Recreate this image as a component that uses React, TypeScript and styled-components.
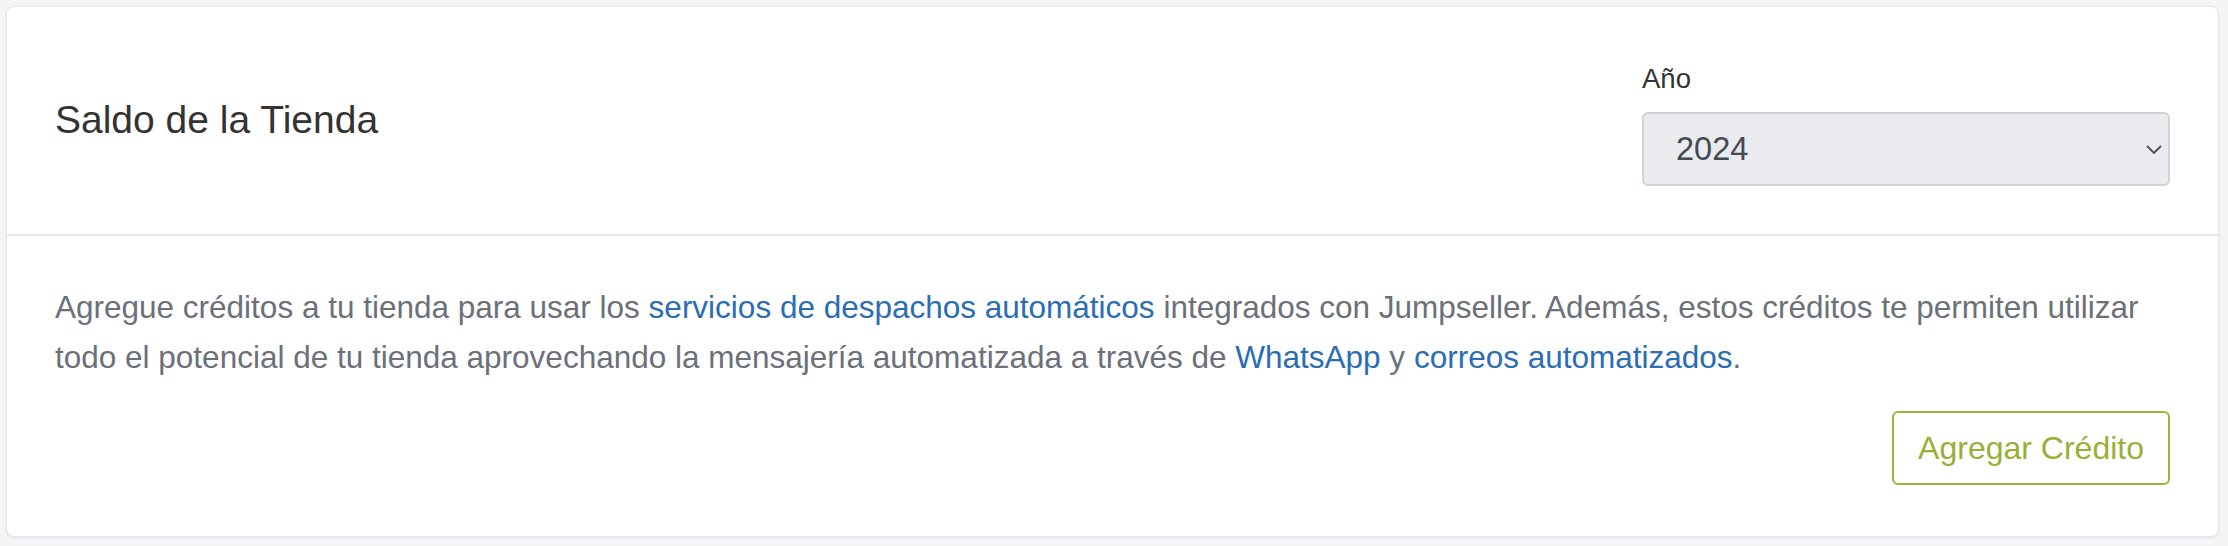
import React, { useState } from 'react';
import styled, { createGlobalStyle } from 'styled-components';

const GlobalStyle = createGlobalStyle`
  html, body {
    margin: 0;
    padding: 0;
    background: #f4f5f7;
    font-family: 'Liberation Sans', Arial, sans-serif;
  }
`;

const years = ['2024', '2023', '2022', '2021'];

export default function App() {
  const [year, setYear] = useState('2024');

  return (
    <>
      <GlobalStyle />
      <Page>
        <Card>
          <CardHeader>
            <Title>Saldo de la Tienda</Title>
            <Field>
              <Label htmlFor="year">Año</Label>
              <SelectWrap>
                <Select id="year" value={year} onChange={(ev) => setYear(ev.target.value)}>
                  {years.map((y) => (
                    <option key={y} value={y}>
                      {y}
                    </option>
                  ))}
                </Select>
                <Chevron width="16" height="9" viewBox="0 0 16 9">
                  <path d="M1 1l7 7 7-7" fill="none" stroke="#4a4f57" strokeWidth="1.8" />
                </Chevron>
              </SelectWrap>
            </Field>
          </CardHeader>
          <CardBody>
            <Text>
              Agregue créditos a tu tienda para usar los <Link href="#">servicios de despachos automáticos</Link>{' '}
              integrados con Jumpseller. Además, estos créditos te permiten utilizar todo el potencial de tu tienda
              aprovechando la mensajería automatizada a través de <Link href="#">WhatsApp</Link> y{' '}
              <Link href="#">correos automatizados</Link>.
            </Text>
            <Actions>
              <OutlineButton type="button">Agregar Crédito</OutlineButton>
            </Actions>
          </CardBody>
        </Card>
      </Page>
    </>
  );
}

const Page = styled.div`
  padding: 6px 9px 10px 6px;
`;

const Card = styled.section`
  background: #fff;
  border: 1px solid #e4e6e9;
  border-radius: 8px;
  box-shadow: 0 1px 3px rgba(0, 0, 0, 0.08);
`;

const CardHeader = styled.header`
  display: flex;
  align-items: center;
  justify-content: space-between;
  padding: 48px;
  border-bottom: 2px solid #e8e9ed;
`;

const Title = styled.h2`
  margin: 0;
  font-size: 39px;
  font-weight: 400;
  color: #333;
  line-height: 1.2;
`;

const Field = styled.div`
  display: flex;
  flex-direction: column;
  width: 528px;
`;

const Label = styled.label`
  font-size: 27.5px;
  line-height: 48px;
  color: #333;
  margin-bottom: 9px;
`;

const SelectWrap = styled.div`
  position: relative;
`;

const Select = styled.select`
  appearance: none;
  width: 100%;
  height: 74px;
  padding: 0 60px 0 32px;
  font-family: inherit;
  font-size: 32.5px;
  color: #454a52;
  background: #e9ebee;
  border: 2px solid #cfd3d8;
  border-radius: 6px;
  outline: none;
`;

const Chevron = styled.svg`
  position: absolute;
  right: 8px;
  top: 33px;
  pointer-events: none;
`;

const CardBody = styled.div`
  padding: 46px 48px 51px;
`;

const Text = styled.p`
  margin: 0;
  font-size: 31.5px;
  line-height: 50px;
  color: #6b7079;
`;

const Link = styled.a`
  color: #2b6db3;
  text-decoration: none;
`;

const Actions = styled.div`
  display: flex;
  justify-content: flex-end;
  margin-top: 29px;
`;

const OutlineButton = styled.button`
  height: 74px;
  padding: 0 24px;
  font-family: inherit;
  font-size: 32px;
  color: #98b035;
  background: #fff;
  border: 2px solid #9cb43c;
  border-radius: 6px;
  cursor: pointer;
`;
